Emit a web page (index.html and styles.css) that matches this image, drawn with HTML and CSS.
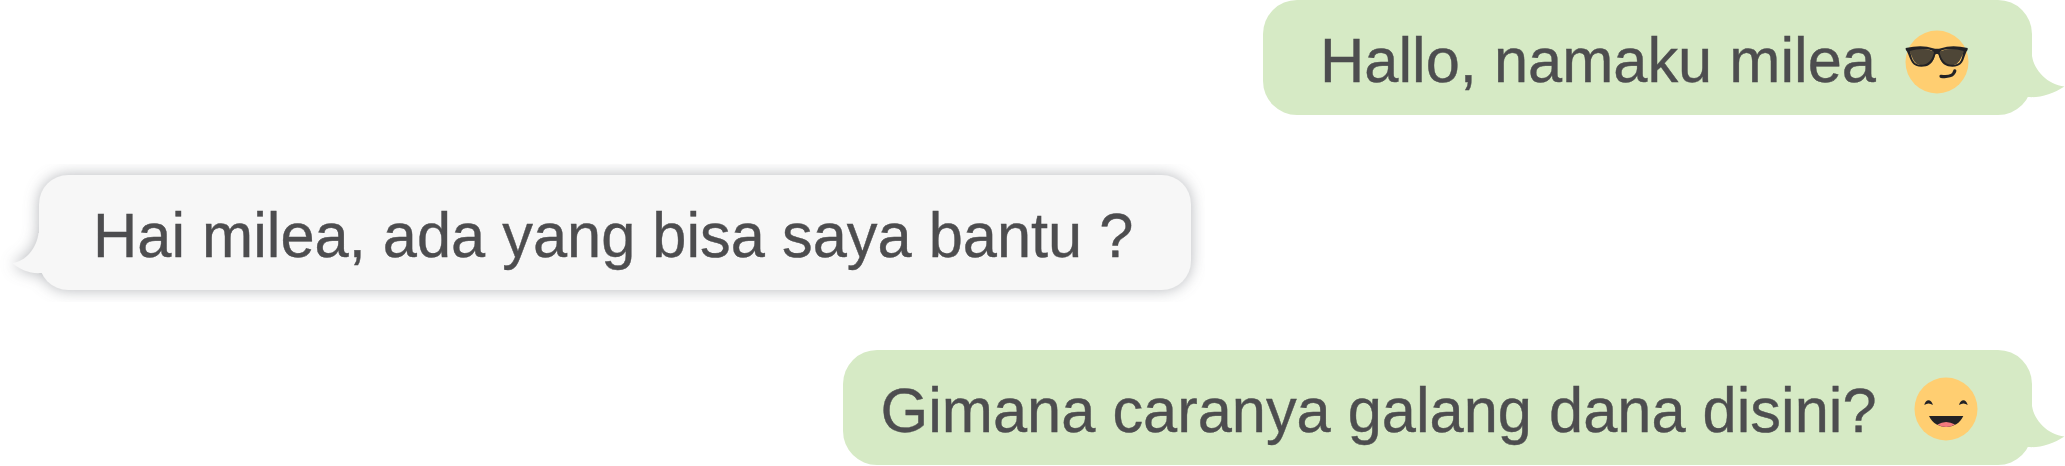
FILE: index.html
```html
<!DOCTYPE html>
<html lang="id">
<head>
<meta charset="utf-8">
<title>Chat</title>
<link rel="stylesheet" href="styles.css">
</head>
<body>
<main class="chat">
  <div class="bubble sent first">
    <span class="text">Hallo, namaku milea</span>
    <svg class="emoji" viewBox="0 0 64 64" aria-hidden="true">
      <circle cx="32" cy="32" r="31.5" fill="#ffce71"/>
      <path d="M4 20Q18 17 28 21Q32 22.300 36 21Q46 17 60 20L56 28Q53 36 44 35.500Q36 35 33.500 24H30.500Q28 35 20 35.500Q10 36 7.500 28Z" fill="#4e4637"/>
      <path fill-rule="evenodd" fill="#222225" d="M.6 18Q17 14.600 28 18.200Q32 19.400 36 18.200Q47 14.600 62.700 18Q63 20.500 61.500 21.500C59.500 26 59 29.500 57 32.500C54 37 47.500 37.200 43 36.200C36.500 34.500 34.500 28 33.500 24.500Q31.800 22.800 30.200 24.500C29 29 27 34.500 21 36.200C16 37.200 10 37 7 32.500C5 29.500 4 25.500 2 21.500Q.4 20.500 .6 18ZM4.800 21C6.500 26 7 30 9.500 32.500C12 35.300 17 35 20 34.200C25.500 32.500 28 27 29 22.200Q27.500 19.800 22 19.200Q13 18.300 4.800 21ZM58.700 21Q50 18.300 41.500 19.200Q36 19.800 34.500 22.200C36 28 38.500 32.500 43.500 34.200C47 35 51.500 35.300 54.500 32.500C57 30 57 26 58.700 21Z"/>
      <path d="M36 46.300C42 47.200 48.500 46 49.800 40.800" fill="none" stroke="#222225" stroke-width="3.200" stroke-linecap="round"/>
    </svg>
    <svg class="tail" viewBox="0 0 40 44" aria-hidden="true"><path d="M7 0C9 14 23 29 39.500 30.500C28 38 15 42 3 41L0 40V0Z"/></svg>
  </div>

  <div class="bubble received">
    <span class="text">Hai milea, ada yang bisa saya bantu ?</span>
    <svg class="tail" viewBox="0 0 40 44" aria-hidden="true"><path d="M26.500 0C25 14 14 29 0 30C9 37 18 41 29.500 40L36 40V0Z"/></svg>
  </div>

  <div class="bubble sent last">
    <span class="text">Gimana caranya galang dana disini?</span>
    <svg class="emoji" viewBox="0 0 64 64" aria-hidden="true">
      <circle cx="32" cy="32" r="31.500" fill="#ffce71"/>
      <path d="M10.300 28C11.500 21.500 17.500 21.500 18.900 28Q14.500 25 10.300 28ZM45 28C46.500 21.500 52.300 21.500 53.700 28Q49.500 25 45 28Z" fill="#222225"/>
      <path d="M15 39H49.300C43 53.500 21.500 53.500 15 39Z" fill="#222225"/>
      <path d="M23.500 47.500Q32 42.500 41 47.500Q32 52.500 23.500 47.500Z" fill="#f37a7e"/>
    </svg>
    <svg class="tail" viewBox="0 0 40 44" aria-hidden="true"><path d="M7 0C9 14 23 29 39.500 30.500C28 38 15 42 3 41L0 40V0Z"/></svg>
  </div>
</main>
</body>
</html>
```
FILE: styles.css
```css
body {
  margin: 0;
  background: #fff;
}

.chat {
  display: flex;
  flex-direction: column;
  gap: 60px;
  height: 466px;
  overflow: hidden;
}

.bubble {
  position: relative;
  display: flex;
  align-items: center;
  box-sizing: border-box;
  flex: none;
  height: 115px;
  color: #4d4d4f;
  font: 61.36px/115px "Liberation Sans", Arial, sans-serif;
}

.text {
  padding-top: 4px;
  white-space: nowrap;
  transform: scaleY(1.04);
  -webkit-text-stroke: 0.4px #4d4d4f;
}

.sent {
  align-self: flex-end;
  justify-content: space-between;
  margin-right: 33px;
  border-radius: 34px;
  background: #d6eac5;
}

.first {
  width: 769px;
  padding: 0 63px 0 57px;
}

.last {
  width: 1189px;
  padding: 0 54.5px 0 37.5px;
}

.received {
  align-self: flex-start;
  width: 1152px;
  margin-left: 39px;
  padding-left: 54px;
  border-radius: 29px;
  background: #f7f7f7;
  filter: drop-shadow(0 0 7.5px rgba(60, 66, 75, 0.38));
  clip-path: inset(-11px -14px -12px -39px);
}

.emoji {
  flex: none;
  width: 64px;
  height: 64px;
  margin-top: 8px;
}

.last .emoji {
  margin-top: 2px;
}

.tail {
  position: absolute;
  top: 56px;
  width: 40px;
  height: 44px;
}

.sent .tail {
  right: -33px;
  fill: #d6eac5;
}

.received .tail {
  top: 57.5px;
  left: -27px;
  fill: #f7f7f7;
}
```
